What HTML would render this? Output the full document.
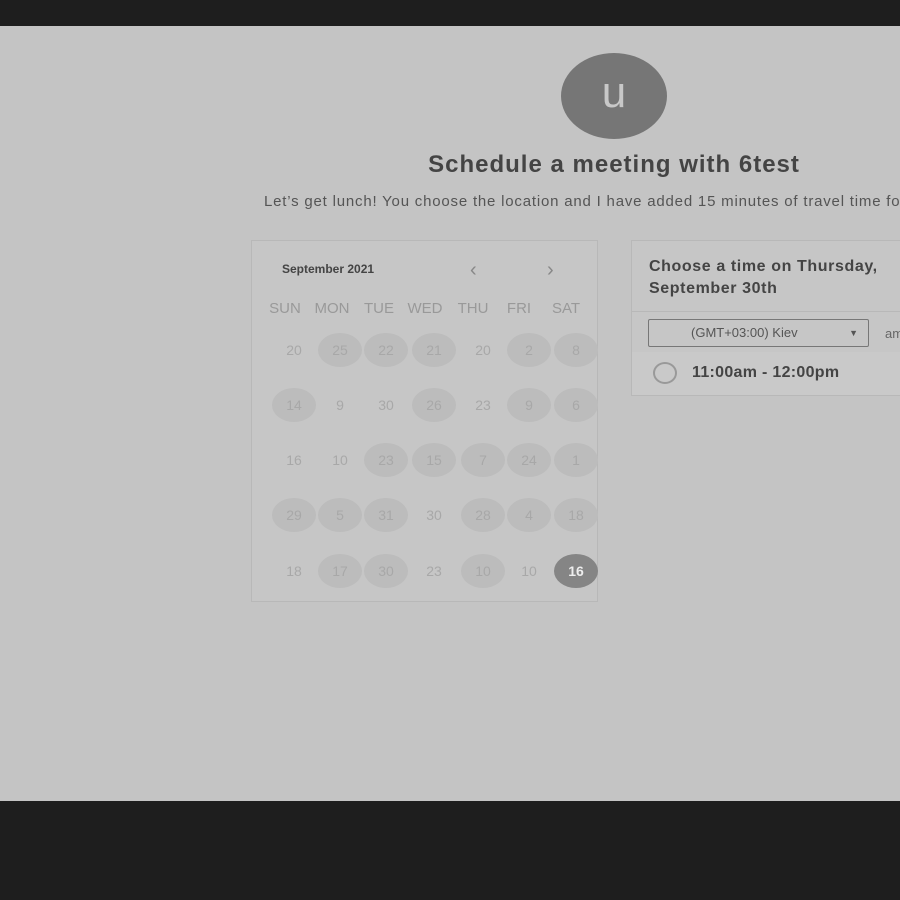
<!DOCTYPE html>
<html><head><style>
body{margin:0;width:900px;height:900px;background:#1e1e1e;position:relative;overflow:hidden;font-family:"Liberation Sans",sans-serif}
.main{position:absolute;left:0;top:26px;width:900px;height:775px;background:#c4c4c4}
.av{position:absolute;left:561px;top:53px;width:106px;height:86px;border-radius:50%;background:#767676;color:#c8c8c8;font-size:44px;text-align:center;line-height:80px}
.t{position:absolute;left:0;width:1228px;top:151px;text-align:center;font-weight:bold;font-size:24px;color:#444;letter-spacing:1px}
.s{position:absolute;left:264px;top:193px;font-size:15px;color:#555;white-space:nowrap;letter-spacing:0.8px}
.cal{position:absolute;left:251px;top:240px;width:345px;height:360px;border:1px solid #b8b8b8;background:#c6c6c6}
.mh{position:absolute;left:30px;top:21px;font-size:12px;font-weight:bold;color:#444}
.nav{position:absolute;top:18px;font-size:20px;color:#888}
.dn{position:absolute;top:59px;font-size:15px;color:#999;width:50px;text-align:center;margin-left:-25px}
.d{position:absolute;width:44px;height:34px;margin-left:-22px;margin-top:-17px;line-height:34px;text-align:center;font-size:14px;color:#a8a8a8;border-radius:50%}
.d.c{background:#bcbcbc}
.d.sel{background:#858585;color:#eee;font-weight:bold}
.rc{position:absolute;left:631px;top:240px;width:280px;height:154px;border:1px solid #b8b8b8;background:#c6c6c6}
.rh{position:absolute;left:17px;top:15px;font-size:16px;font-weight:bold;color:#444;line-height:22px;letter-spacing:0.6px}
.sep{position:absolute;left:0;right:0;top:70px;height:1px;background:#b8b8b8}
.sel2{position:absolute;left:16px;top:78px;width:219px;height:26px;border:1px solid #777;border-radius:2px;font-size:13px;color:#555;line-height:26px}
.tr{position:absolute;left:0;right:0;top:111px;height:43px;background:#c9c9c9}
</style></head><body>
<div class="main"></div>
<div class="av">u</div>
<div class="t">Schedule a meeting with 6test</div>
<div class="s">Let’s get lunch! You choose the location and I have added 15 minutes of travel time for</div>
<div class="cal">
<div class="mh">September 2021</div>
<div class="nav" style="left:218px">&lsaquo;</div>
<div class="nav" style="left:295px">&rsaquo;</div>
<div class="dn" style="left:33px">SUN</div><div class="dn" style="left:80px">MON</div><div class="dn" style="left:127px">TUE</div><div class="dn" style="left:173px">WED</div><div class="dn" style="left:221px">THU</div><div class="dn" style="left:267px">FRI</div><div class="dn" style="left:314px">SAT</div>
</div>
<div id="g"></div>
<div class="rc">
<div class="rh">Choose a time on Thursday,<br>September 30th</div>
<div class="sep"></div>
<div class="sel2"><span style="margin-left:42px">(GMT+03:00) Kiev</span><span style="position:absolute;right:10px;font-size:9px">&#9660;</span></div>
<div style="position:absolute;left:253px;top:85px;font-size:13px;color:#666">am</div>
<div class="tr"><div style="position:absolute;left:21px;top:10px;width:24px;height:22px;border:2px solid #999;border-radius:50%;box-sizing:border-box"></div><div style="position:absolute;left:60px;top:12px;font-size:16px;font-weight:bold;color:#444;letter-spacing:0.3px">11:00am - 12:00pm</div></div>
</div>
<script>
var xs=[294,340,386,434,483,529,576],ys=[350,405,460,515,571];
var rows=[["20","25c","22c","21c","20","2c","8c"],["14c","9","30","26c","23","9c","6c"],["16","10","23c","15c","7c","24c","1c"],["29c","5c","31c","30","28c","4c","18c"],["18","17c","30c","23","10c","10","16s"]];
var h="";rows.forEach(function(r,i){r.forEach(function(v,j){var c=v.slice(-1),n=v.replace(/[cs]$/,"");var cl=c=="c"?" c":c=="s"?" sel":"";h+='<div class="d'+cl+'" style="left:'+xs[j]+'px;top:'+ys[i]+'px">'+n+'</div>';});});
document.getElementById("g").innerHTML=h;
</script>
</body></html>
